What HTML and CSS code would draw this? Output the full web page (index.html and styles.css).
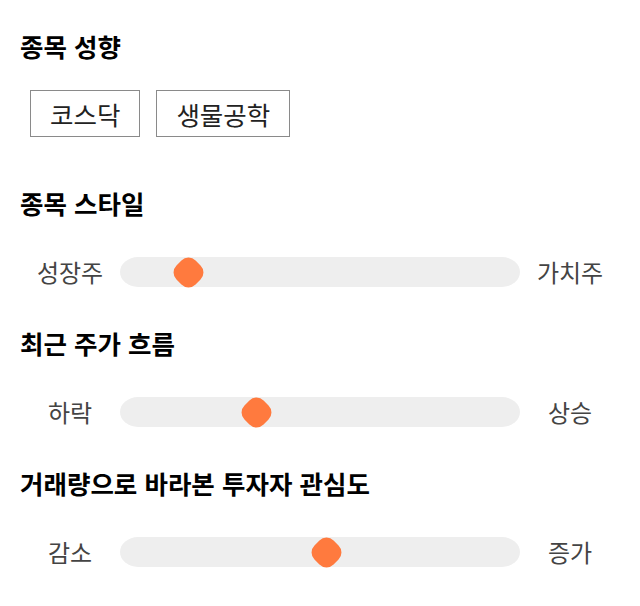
FILE: index.html
```html
<!DOCTYPE html>
<html lang="ko">
<head>
    <meta charset="UTF-8">
    <meta name="viewport" content="width=device-width, initial-scale=1.0">
    <title>종목 성향</title>
    <link rel="stylesheet" href="styles.css">
</head>
<body>

<div class="page">
    <section class="group group-tags">
        <h2>종목 성향</h2>
        <div class="tags">
            <span class="tag">코스닥</span>
            <span class="tag">생물공학</span>
        </div>
    </section>

    <section class="group">
        <h2>종목 스타일</h2>
        <div class="slider-row">
            <span class="side">성장주</span>
            <div class="track">
                <span class="thumb" style="left: 17%;"></span>
            </div>
            <span class="side">가치주</span>
        </div>
    </section>

    <section class="group">
        <h2>최근 주가 흐름</h2>
        <div class="slider-row">
            <span class="side">하락</span>
            <div class="track">
                <span class="thumb" style="left: 34%;"></span>
            </div>
            <span class="side">상승</span>
        </div>
    </section>

    <section class="group">
        <h2>거래량으로 바라본 투자자 관심도</h2>
        <div class="slider-row">
            <span class="side">감소</span>
            <div class="track">
                <span class="thumb" style="left: 51.5%;"></span>
            </div>
            <span class="side">증가</span>
        </div>
    </section>
</div>

</body>
</html>
```

FILE: styles.css
```css
body {
    margin: 0;
    padding: 0;
    background: #ffffff;
    color: #000000;
    font-family: "Noto Sans CJK KR", "Noto Sans", sans-serif;
}
.page {
    padding: 30px 20px 20px;
    display: flex;
    flex-direction: column;
    gap: 40px;
}
h2 {
    margin: 0;
    font-size: 25.5px;
    line-height: 32px;
    font-weight: 700;
    color: #000000;
}
.group-tags {
    margin-bottom: 10px;
}
.tags {
    display: flex;
    gap: 16px;
    margin-top: 28px;
    padding-left: 10px;
}
.tag {
    box-sizing: border-box;
    height: 47px;
    line-height: 45px;
    padding: 0 19px;
    border: 1px solid #8a8a8a;
    font-size: 25.5px;
    color: #222222;
}
.slider-row {
    display: grid;
    grid-template-columns: 100px 400px 100px;
    align-items: center;
    margin-top: 38px;
}
.side {
    text-align: center;
    font-size: 24px;
    line-height: 30px;
    color: #444444;
}
.track {
    position: relative;
    height: 30px;
    background-color: #eeeeee;
    border-radius: 18px / 15px;
}
.thumb {
    position: absolute;
    top: 50%;
    width: 27px;
    height: 27px;
    margin-left: -13.5px;
    margin-top: -13.5px;
    background-color: #ff7a3e;
    border-radius: 10px;
    transform: rotate(45deg);
}
```
